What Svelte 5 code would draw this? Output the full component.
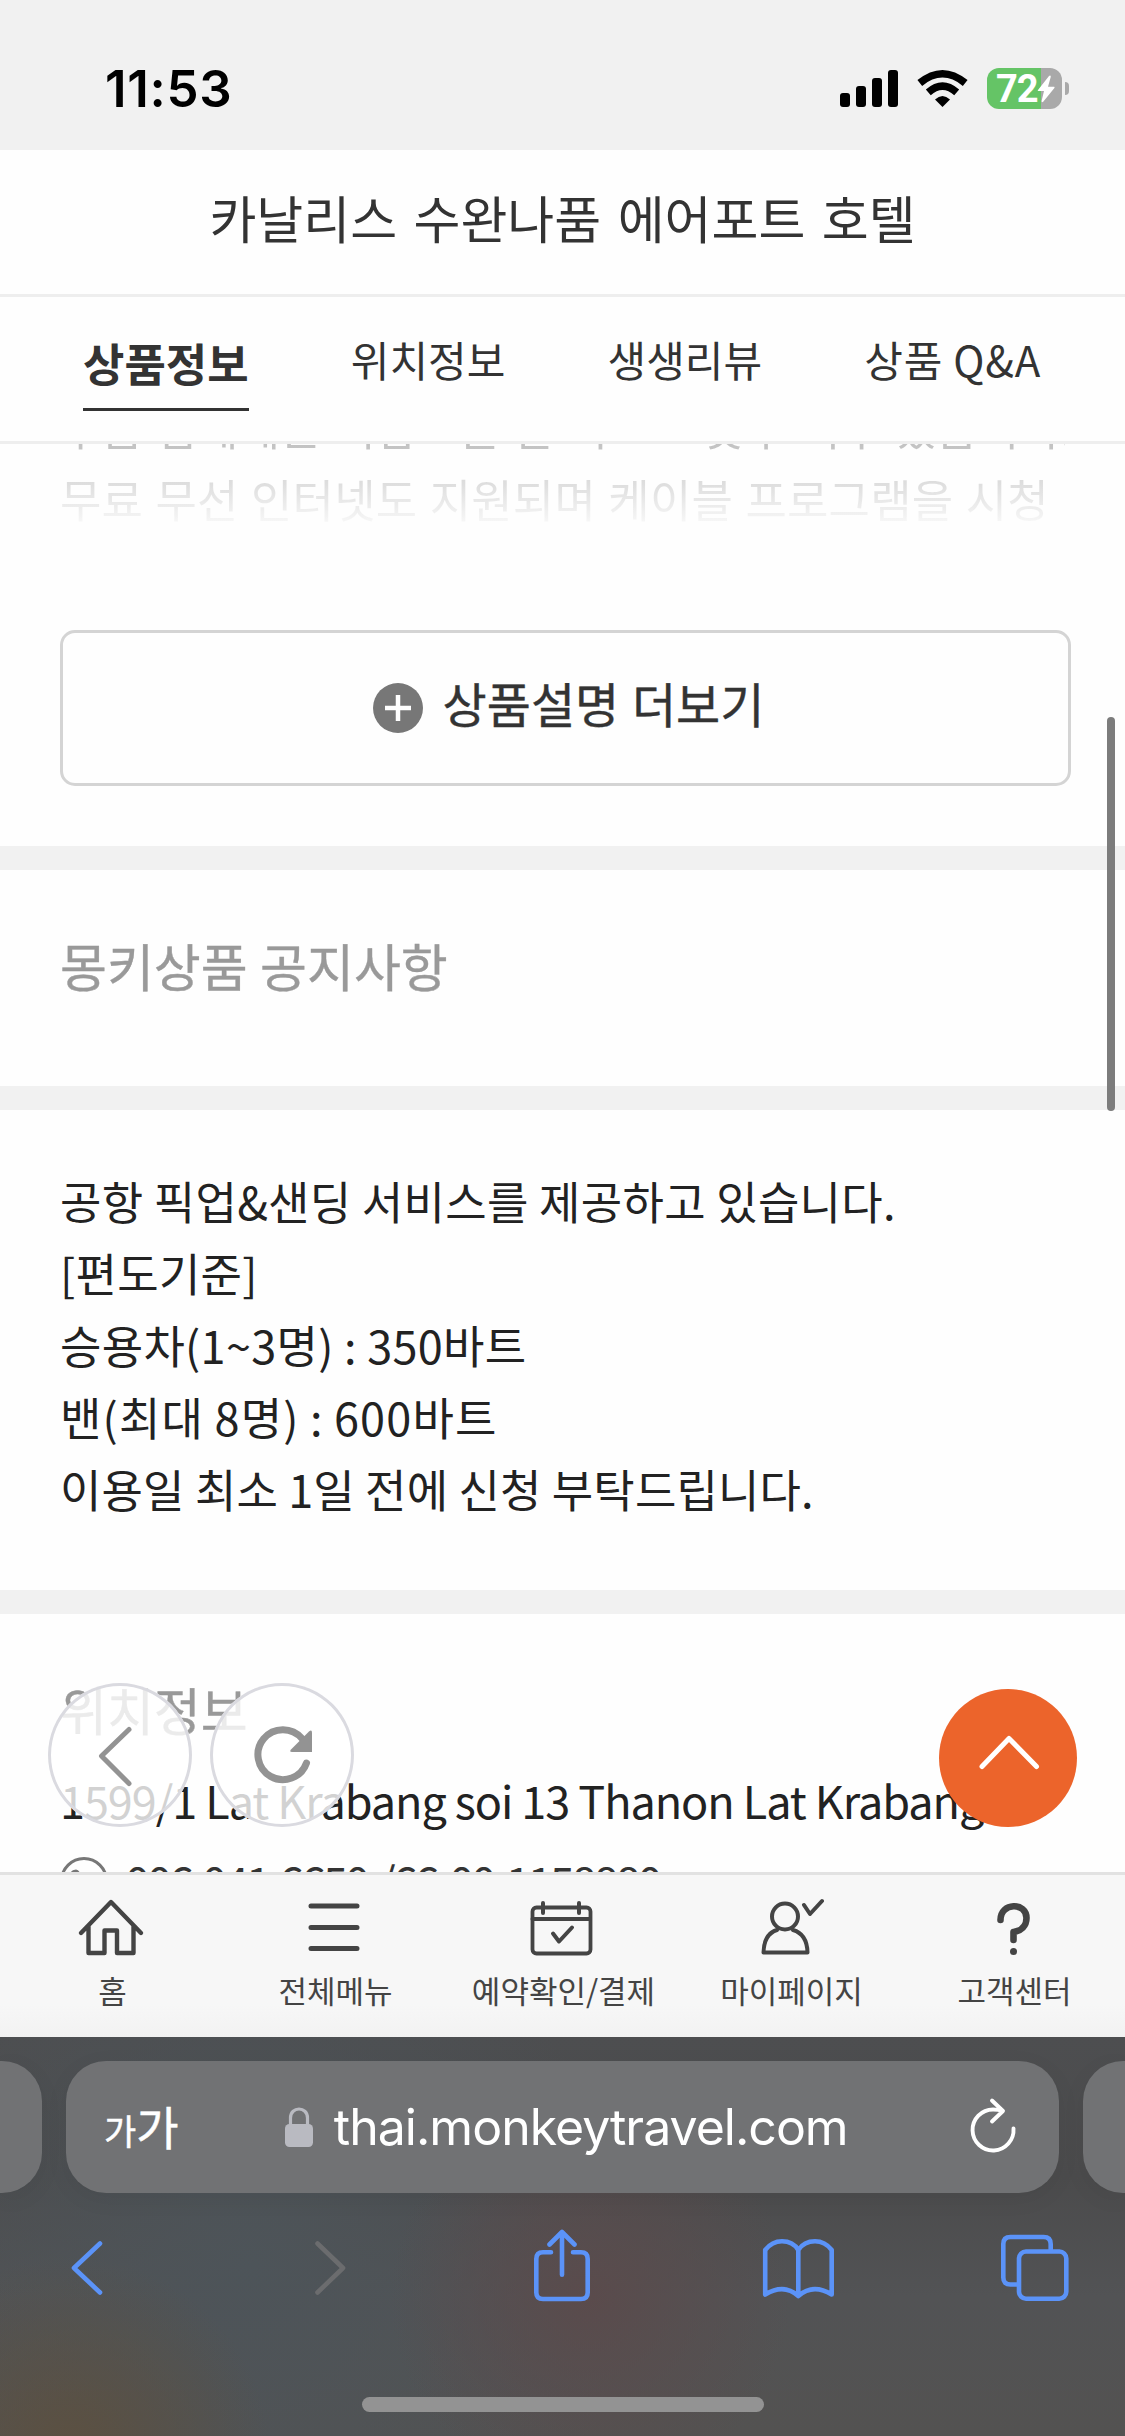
<script lang="ts">
  const hotel = '카날리스 수완나품 에어포트 호텔';
  const tabs = ['상품정보', '위치정보', '생생리뷰', '상품 Q&A'];
  let current = $state('상품정보');

  const notices = [
    '공항 픽업&샌딩 서비스를 제공하고 있습니다.',
    '[편도기준]',
    '승용차(1~3명) : 350바트',
    '밴(최대 8명) : 600바트',
    '이용일 최소 1일 전에 신청 부탁드립니다.'
  ];

  const menu = [
    { icon: 'home', label: '홈' },
    { icon: 'list', label: '전체메뉴' },
    { icon: 'calendar', label: '예약확인/결제' },
    { icon: 'user', label: '마이페이지' },
    { icon: 'help', label: '고객센터' }
  ];
</script>

<div class="screen">
  <div class="status">
    <span class="time">11:53</span>
    <div class="indicators">
      <svg class="signal" width="58" height="37" viewBox="0 0 58 37">
        <rect y="23" width="10" height="14" rx="3" />
        <rect x="16" y="16" width="10" height="21" rx="3" />
        <rect x="32" y="8" width="10" height="29" rx="3" />
        <rect x="48" width="10" height="37" rx="3" />
      </svg>
      <svg class="wifi" width="51" height="37" viewBox="0 0 51 37">
        <path d="M2.8 13 Q25.5 -5.5 48.2 13" fill="none" stroke="#000" stroke-width="7.5" />
        <path d="M11.3 22.4 Q25.5 10 39.7 22.4" fill="none" stroke="#000" stroke-width="7.5" />
        <path d="M18 29.5 Q25.5 22.5 33 29.5 L25.5 37Z" />
      </svg>
      <div class="battery">
        <span class="percent">72</span>
        <svg class="bolt" width="18" height="28" viewBox="0 0 18 28">
          <path d="M12 1 L1 15 Q0 16 1.5 16 H7 L4.6 26 Q4.6 28 6.2 26.8 L17.4 13 Q18 11.8 17 11.8 H11 L13.8 1.8 Q13.6 -.2 12 1Z" fill="#fff" />
        </svg>
      </div>
      <i class="nub"></i>
    </div>
  </div>

  <header class="title">{hotel}</header>

  <nav class="tabs">
    {#each tabs as tab}
      <button class:active={tab === current} onclick={() => current = tab}>{tab}</button>
    {/each}
  </nav>

  <main>
    <section class="about">
      <div class="excerpt">
        <p>두품 점에게는 서담으론 만 이스트 옷주 이루 있습니다.</p>
        <p>무료 무선 인터넷도 지원되며 케이블 프로그램을 시청</p>
      </div>
      <button class="more">
        <svg width="50" height="50" viewBox="0 0 50 50">
          <circle cx="25" cy="25" r="25" fill="#777" />
          <path d="M12 25 H38 M25 12 V38" stroke="#fff" stroke-width="4.5" />
        </svg>
        <span>상품설명 더보기</span>
      </button>
    </section>

    <section class="heading"><h2>몽키상품 공지사항</h2></section>

    <section class="notice">
      {#each notices as line}
        <p>{line}</p>
      {/each}
    </section>

    <section class="location">
      <h2>위치정보</h2>
      <p class="address">1599/1 Lat Krabang soi 13 Thanon Lat Krabang</p>
      <div class="phone">
        <svg width="48" height="48" viewBox="0 0 48 48" fill="none" stroke="#777" stroke-width="3">
          <circle cx="24" cy="24" r="22.5" />
          <path d="M12 16 Q13 14 16 14 Q18 14 19 18 L17 22 Q20 29 27 31 L31 29 Q35 30 35 33 Q33 37 29 36 Q15 33 12 16Z" />
        </svg>
        <span>006 041 6650 /66-00-1158880</span>
      </div>
    </section>

    <i class="scrollbar"></i>
    <button class="float back" aria-label="뒤로">
      <svg width="144" height="144" viewBox="0 0 144 144">
        <path d="M81 46.5 L53.5 73 L81 100.5" fill="none" stroke="#939393" stroke-width="5" stroke-linecap="round" stroke-linejoin="round" />
      </svg>
    </button>
    <button class="float reload" aria-label="새로고침">
      <svg width="144" height="144" viewBox="0 0 144 144">
        <path d="M92 55.5 A25 25 0 1 0 96.5 80" fill="none" stroke="#939393" stroke-width="7" stroke-linecap="round" />
        <path d="M99 48.5 Q102 46 102 50 V69 H82 Q79 69 81 66.5Z" fill="#939393" />
      </svg>
    </button>
    <button class="top" aria-label="맨 위로">
      <svg width="138" height="138" viewBox="0 0 138 138">
        <path d="M43 77.5 L70 49.5 L97.5 77.5" fill="none" stroke="#fff" stroke-width="5" stroke-linecap="round" stroke-linejoin="round" />
      </svg>
    </button>
  </main>

  <nav class="menu">
    {#each menu as item}
      <div class="item {item.icon}">
        <svg width="66" height="60" viewBox="0 0 66 60" fill="none" stroke="#444" stroke-width="4.4" stroke-linecap="round" stroke-linejoin="round">
          {#if item.icon === 'home'}
            <path d="M3 37 L33 6 L63 37 M10.5 30 V57 H26.5 V34.5 H39 V57 H55.5 V30" />
          {:else if item.icon === 'list'}
            <path d="M10 10 H56 M10 31.5 H56 M10 52.5 H56" stroke-width="5" />
          {:else if item.icon === 'calendar'}
            <rect x="4.5" y="11.5" width="58" height="46" rx="4" stroke-width="3.8" />
            <path d="M4.5 23 H62 M15 7 V17 M51 7 V17 M25 37.5 L31 45.5 L44 31.5" stroke-width="4" />
          {:else if item.icon === 'user'}
            <circle cx="28" cy="20.5" r="13" stroke-width="4" />
            <path d="M20 34 Q7 38 6.5 56.5 H50.5 Q50 38 36 34 M47 9 L53 18 L65 5" stroke-width="4" />
          {:else}
            <path d="M20.5 24 C20.5 6 46.5 6 46.5 22 C46.5 30 41 35 33.5 36 V44" stroke-width="6.6" />
            <circle cx="33.5" cy="55.5" r="3.5" fill="#444" stroke="none" />
          {/if}
        </svg>
        <span>{item.label}</span>
      </div>
    {/each}
  </nav>

  <footer class="browser">
    <div class="pills">
      <div class="pill side left"></div>
      <div class="pill address-bar">
        <span class="aa"><small>가</small>가</span>
        <div class="url">
          <svg width="28" height="40" viewBox="0 0 28 40">
            <path d="M5.5 18 V11 C5.5 -1 22.5 -1 22.5 11 V18" fill="none" stroke="#b9bac1" stroke-width="3.2" />
            <rect y="17" width="28" height="23" rx="4.5" fill="#b9bac1" />
          </svg>
          <span>thai.monkeytravel.com</span>
        </div>
        <svg class="refresh" width="46" height="56" viewBox="0 0 46 56" fill="none" stroke="#fff" stroke-width="3.9" stroke-linecap="round" stroke-linejoin="round">
          <path d="M33 12 Q28 10.5 23 10.5 A20.5 20.5 0 1 0 43.5 29.5 M22 1.5 L33 12 L22 22.5" />
        </svg>
      </div>
      <div class="pill side right"></div>
    </div>
    <div class="tools">
      <svg width="74" height="74" viewBox="0 0 74 74"><path d="M34 15.5 L8 40 L34 64.5" /></svg>
      <svg class="disabled" width="74" height="74" viewBox="0 0 74 74"><path d="M18.5 15.5 L44 40 L18.5 64.5" /></svg>
      <svg width="74" height="74" viewBox="0 0 74 74"><path d="M19 24.3 H11 Q4.3 24.3 4.3 31 V64.5 Q4.3 71 11 71 H49 Q55.7 71 55.7 64.5 V31 Q55.7 24.3 49 24.3 H41 M30 46.7 V4 M17.5 16.5 L30 4 L42.5 16.5" /></svg>
      <svg width="74" height="74" viewBox="0 0 74 74"><path d="M33.3 68 Q19 55 .2 66.5 V22 Q7 13.3 17 13.3 Q28 13.3 33.3 22 Q39 13.3 50 13.3 Q60 13.3 66.7 22 V66.5 Q48 55 33.3 68 V22" /></svg>
      <svg width="74" height="74" viewBox="0 0 74 74"><path d="M19 56.5 H12.5 Q5.3 56.5 5.3 49.5 V16 Q5.3 9 12.5 9 H45.5 Q52.7 9 52.7 16 V22" /><rect x="21" y="23.5" width="47.3" height="47.2" rx="7" /></svg>
    </div>
    <i class="indicator"></i>
  </footer>
</div>

<style>
  :global(body) { margin: 0; background: #fff; }
  .screen { width: 1125px; height: 2436px; display: flex; flex-direction: column; overflow: hidden; background: #fefefe; color: #333; font-family: "Noto Sans CJK KR", sans-serif; }
  .screen * { box-sizing: border-box; }
  button { border: 0; background: none; padding: 0; font: inherit; color: inherit; }
  h2, p { margin: 0; font-weight: 400; }
  svg { display: block; flex: none; overflow: visible; }

  .status { height: 150px; flex: none; background: #f1f1f1; display: flex; justify-content: space-between; align-items: flex-start; padding: 59px 56px 0 105px; color: #000; font-family: Inter, sans-serif; }
  .time { font-size: 51px; line-height: 60px; font-weight: 600; letter-spacing: 0.7px; }
  .indicators { display: flex; padding-top: 9px; }
  .signal { margin: 2px 19px 0 0; }
  .wifi { margin: 2px 19px 0 0; }
  .battery { width: 75px; height: 41px; border-radius: 12px; background: linear-gradient(to right, #65c466 54px, #a9a9a9 54px); display: flex; padding: 7px 0 0 9px; }
  .percent { width: 41px; color: #fff; font: 700 38px/29px Roboto, sans-serif; letter-spacing: -1px; }
  .nub { width: 4px; height: 13px; margin: 14px 0 0 3px; border-radius: 0 5px 5px 0; background: #a9a9a9; }

  .title { height: 147px; flex: none; border-bottom: 3px solid #eee; text-align: center; font-size: 51px; line-height: 134px; word-spacing: 5px; }
  .tabs { height: 147px; flex: none; display: flex; justify-content: space-between; align-items: flex-start; border-bottom: 3px solid #eee; padding: 32px 84px 0 83px; font-size: 42px; line-height: 60px; word-spacing: 5px; }
  .tabs .active { height: 82px; padding-bottom: 11px; border-bottom: 3px solid #333; font-size: 45px; font-weight: 700; }
  .tabs button:last-child { letter-spacing: 0.8px; }

  main { position: relative; height: 1428px; flex: none; overflow: hidden; }
  section { display: flow-root; padding: 0 60px; border-bottom: 24px solid #f1f1f1; }
  .about { height: 426px; }
  .excerpt { height: 144px; margin-top: -53px; line-height: 72px; font-size: 45px; letter-spacing: 0.2px; word-spacing: 2px; white-space: nowrap; color: transparent; background: linear-gradient(#b0b0b0, #c4c4c4 40%, #dcdcdc 62%, #fafafa 95%); background-clip: text; -webkit-background-clip: text; }
  .more { width: 1011px; height: 156px; margin-top: 95px; border: 3px solid #d4d4d4; border-radius: 15px; display: flex; justify-content: center; align-items: center; gap: 20px; padding-left: 6px; font-size: 48px; }
  .more span { margin-top: -12px; word-spacing: 2px; -webkit-text-stroke: 0.4px; }
  .heading { height: 240px; padding-top: 57px; }
  h2 { color: #999; font-size: 51px; line-height: 76px; word-spacing: 1px; -webkit-text-stroke: 0.4px; }
  .notice { height: 504px; padding-top: 55px; color: #222; font-size: 45px; line-height: 72px; letter-spacing: 0.3px; }
  .notice p:nth-child(4) { letter-spacing: 1.2px; word-spacing: -1px; }
  .notice p:last-child { letter-spacing: 0.15px; }
  .location { height: 300px; padding-top: 57px; border: 0; }
  .address { margin-top: 21px; color: #222; font-size: 45px; line-height: 64px; letter-spacing: -1.05px; white-space: nowrap; }
  .phone { display: flex; gap: 17px; margin-top: 25px; font-size: 45px; line-height: 48px; letter-spacing: -3px; word-spacing: 4px; }

  .scrollbar { position: absolute; left: 1107px; top: 273px; width: 8px; height: 394px; border-radius: 4px; background: #7c7c7c; }
  .float { position: absolute; top: 1239px; width: 144px; height: 144px; border-radius: 50%; background: rgba(255, 255, 255, 0.8); box-shadow: inset 0 0 0 3px #dadae0; }
  .back { left: 48px; }
  .reload { left: 210px; }
  .top { position: absolute; left: 939px; top: 1245px; width: 138px; height: 138px; border-radius: 50%; background: #ec642b; }

  .menu { height: 165px; flex: none; display: grid; grid-template-columns: 223px 223px 233px 223px 223px; border-top: 3px solid #e2e2e2; background: linear-gradient(#f7f7f7 80%, #f2f2f2); color: #444; }
  .item { display: flex; flex-direction: column; align-items: center; padding: 21px 0 0 2px; font-size: 31px; line-height: 40px; }
  .item svg { margin-left: -4px; }
  .calendar svg { margin-left: -6px; }
  .item span { margin-top: 14px; white-space: nowrap; }

  .browser { flex: 1; position: relative; display: flex; flex-direction: column; overflow: hidden; background: radial-gradient(circle at 70px 420px, #5c5040, transparent 200px), radial-gradient(circle at 590px 260px, #5a4b4c, transparent 200px), radial-gradient(circle at 250px 230px, #4d5459, transparent 380px), linear-gradient(#4d4e50, #4b4b4c 140px, #525355 260px, #535251); }
  .pills { display: flex; gap: 24px; margin-top: 24px; }
  .pill { height: 132px; border-radius: 40px; background: #717274; box-shadow: 0 6px 24px rgba(0, 0, 0, 0.05); }
  .side { width: 42px; flex: none; }
  .left { border-radius: 0 40px 40px 0; }
  .right { border-radius: 40px 0 0 40px; }
  .address-bar { width: 993px; flex: none; display: flex; align-items: center; justify-content: space-between; padding: 0 43px 0 38px; color: #fff; }
  .aa { font-size: 46px; line-height: 60px; -webkit-text-stroke: 0.5px; }
  .aa small { font-size: 35px; }
  .url { display: flex; align-items: center; gap: 21px; margin-right: 16px; font: 50px/60px Inter, sans-serif; letter-spacing: -1px; }
  .tools { display: flex; justify-content: space-between; margin-top: 35px; padding: 0 53px 0 66px; }
  .tools svg { fill: none; stroke: #5b93f8; stroke-width: 4.6; stroke-linecap: round; stroke-linejoin: round; }
  .tools .disabled { stroke: #6b6c6e; }
  .indicator { width: 402px; height: 15px; margin: 95px auto 0; border-radius: 8px; background: #939393; }
</style>
